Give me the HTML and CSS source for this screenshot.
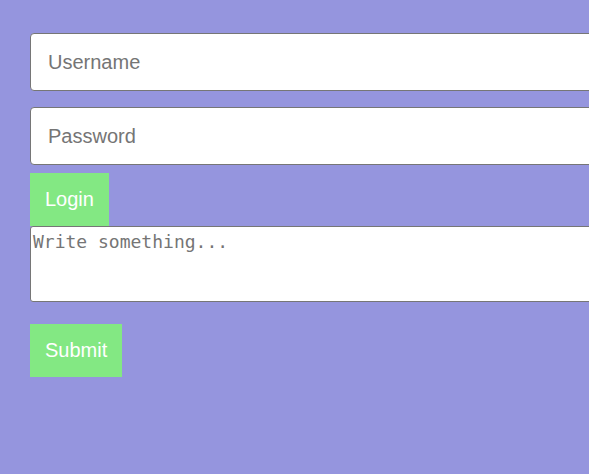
FILE: index.html
```html
<!DOCTYPE html>
<html>
<head>
<meta charset="utf-8">
<link rel="stylesheet" href="styles.css">
</head>
<body>
<form class="login">
  <input class="field" type="text" placeholder="Username">
  <input class="field" type="password" placeholder="Password">
  <button class="btn btn-login" type="button">Login</button>
</form>
<form class="post">
  <textarea class="note" placeholder="Write something..."></textarea>
  <button class="btn" type="button">Submit</button>
</form>
</body>
</html>
```
FILE: styles.css
```css
html {
  overflow: hidden;
  background: #9595de;
}
body {
  margin: 0;
  padding: 33px 0 0 30px;
  font-family: "Liberation Sans", Arial, sans-serif;
}
.login, .post {
  margin: 0;
}
.field {
  display: block;
  box-sizing: content-box;
  width: 100%;
  height: 24px;
  padding: 16px 17px;
  margin: 0 0 16px 0;
  border: 1px solid #767676;
  border-radius: 4px;
  background: #fff;
  font-family: "Liberation Sans", Arial, sans-serif;
  font-size: 20px;
  color: #333;
  outline: none;
}
.field + .field {
  margin-bottom: 8px;
}
.field::placeholder {
  color: #757575;
}
.btn {
  display: block;
  margin: 0;
  padding: 15px 15px;
  border: none;
  border-radius: 0;
  background: #83e883;
  color: #fff;
  font-family: "Liberation Sans", Arial, sans-serif;
  font-size: 20px;
  line-height: 23px;
}
.note {
  display: block;
  box-sizing: content-box;
  width: 100%;
  height: 69px;
  margin: 0 0 22px 0;
  padding: 4px 2px 1px 2px;
  border: 1px solid #767676;
  border-radius: 3px;
  background: #fff;
  font-family: "DejaVu Sans Mono", monospace;
  font-size: 18px;
  resize: none;
}
.note::placeholder {
  color: #757575;
}
```
